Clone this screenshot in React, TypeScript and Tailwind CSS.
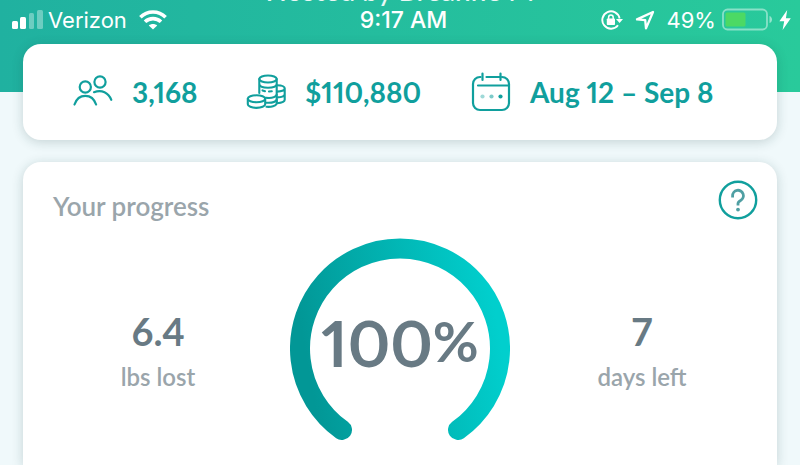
import React from 'react';

const SignalIcon: React.FC = () => (
  <svg className="h-5 w-8" viewBox="0 0 32 20" fill="white" aria-hidden="true">
    <rect x="0" y="11" width="6" height="8" rx="1.5" />
    <rect x="8" y="7" width="6" height="12" rx="1.5" />
    <rect x="17" y="3" width="5" height="16" rx="1.5" opacity="0.35" />
    <rect x="25" y="0" width="6" height="19" rx="1.5" opacity="0.35" />
  </svg>
);

const WifiIcon: React.FC = () => (
  <svg className="h-5 w-7" viewBox="0 0 28 20" fill="none" stroke="white" strokeWidth="3.6" aria-hidden="true">
    <path d="M1.4 7.2C8.4 .2 19.6 .2 26.6 7.2" />
    <path d="M6 11.8c4.5-4.3 11.5-4.3 16 0" />
    <path d="M14 19.5l-4.2-4.1c2.2-2 6.2-2 8.4 0z" fill="white" stroke="none" />
  </svg>
);

const RotationLockIcon: React.FC = () => (
  <svg className="h-5 w-[22px]" viewBox="0 0 22 20" fill="none" stroke="white" strokeWidth="1.9" aria-hidden="true">
    <path d="M18.6 8.5A8.7 8.7 0 1 0 17 15.2" />
    <path d="M15 9h7l-3.4 4z" fill="white" stroke="none" />
    <rect x="5.8" y="8.5" width="8.2" height="6.5" rx=".8" fill="white" stroke="none" />
    <path d="M7.6 9.5V7.4a2.3 2.3 0 0 1 4.6 0v2.1" strokeWidth="1.5" />
  </svg>
);

const LocationIcon: React.FC = () => (
  <svg className="h-5 w-5" viewBox="0 0 20 20" fill="none" stroke="white" strokeWidth="2.3" strokeLinejoin="round" aria-hidden="true">
    <path d="M18 2L2 9.4l8.2.8.8 8.2z" />
  </svg>
);

const BatteryIcon: React.FC = () => (
  <svg className="h-6 w-[51px]" viewBox="0 0 51 24" fill="none" aria-hidden="true">
    <rect x="1" y="1.5" width="44" height="20" rx="4.5" stroke="white" strokeOpacity="0.45" strokeWidth="1.8" />
    <rect x="3.5" y="4.5" width="20" height="14" rx="1.5" fill="#4cd964" />
    <path d="M47.5 8c3.4 1 3.4 6 0 7z" fill="white" fillOpacity="0.5" />
  </svg>
);

const BoltIcon: React.FC = () => (
  <svg className="h-5 w-3" viewBox="0 0 12 20" fill="white" aria-hidden="true">
    <path d="M8.2 0L.4 11.2h4.8L3.6 20 11.8 8.2H6.9z" />
  </svg>
);

const PeopleIcon: React.FC = () => (
  <svg className="h-10 w-10" viewBox="0 0 40 40" fill="none" stroke="currentColor" strokeWidth="2.2" strokeLinecap="round" aria-hidden="true">
    <circle cx="12.3" cy="15" r="5.6" />
    <circle cx="27" cy="10" r="5.6" />
    <path d="M1.5 32.5c1.7-5.2 5.8-8.7 10.8-8.7s9.1 3.5 10.8 8.7" />
    <path d="M21 20.2c7.8-3 14.5.5 17.3 7.6" />
  </svg>
);

const CoinsIcon: React.FC = () => (
  <svg className="h-10 w-10" viewBox="0 0 40 40" fill="none" stroke="currentColor" strokeWidth="2.1" strokeLinecap="round" aria-hidden="true">
    <ellipse cx="22" cy="7" rx="8.7" ry="3.5" />
    <path d="M13.3 7v14M30.7 7v22.5M13.3 12.3c1 4.6 16.4 4.6 17.4 0" />
    <path d="M16.5 18.4l2.5.8M23 19.5l2.8-.2" />
    <path d="M20 25.8c4.8.5 9.4-.6 10.7-3M20.5 30.7c4.6.3 9.1-.8 10.2-3M20.5 34.8c4.8.5 9.2-.9 10.2-3.2v-3" />
    <path d="M31 13.2c4.3.1 7.7 1.2 7.7 3.1v11.5c0 1.9-3.4 3.1-7.7 3.4M31 19.6c4.3-.1 7.7-1.4 7.7-3.3M31 25.4c4.3-.1 7.7-1.5 7.7-3.4" />
    <ellipse cx="10.5" cy="26.8" rx="8.7" ry="3.5" />
    <path d="M1.8 26.8v5.4c0 2.1 3.9 3.7 8.7 3.7s8.7-1.6 8.7-3.7v-5.4" />
  </svg>
);

const CalendarIcon: React.FC = () => (
  <svg className="h-10 w-10" viewBox="0 0 40 40" fill="none" stroke="currentColor" strokeWidth="2.2" strokeLinecap="round" aria-hidden="true">
    <path d="M9.5 5H9a7 7 0 0 0-7 7v19a7 7 0 0 0 7 7h22a7 7 0 0 0 7-7V12a7 7 0 0 0-7-7" />
    <path d="M15.5 5H29.5M11.5 1.5v6.5M29.5 1.5v6.5M7 13.5h30.5" />
    <circle cx="11.5" cy="24.5" r="2.1" fill="currentColor" stroke="none" opacity="0.4" />
    <circle cx="20.5" cy="24.5" r="2.1" fill="currentColor" stroke="none" opacity="0.55" />
    <circle cx="29.5" cy="24.5" r="2.1" fill="currentColor" stroke="none" />
  </svg>
);

const HelpIcon: React.FC = () => (
  <svg className="h-10 w-10" viewBox="0 0 40 40" fill="none" stroke="#109f9d" strokeWidth="2.4" aria-hidden="true">
    <circle cx="20" cy="20" r="18.2" />
    <path d="M14.6 17.4v-1.6a5.4 5.4 0 1 1 8 4.6c-1.9 1-2.6 1.7-2.6 3.2v1.8" stroke="#4f9fa3" strokeWidth="2.8" />
    <circle cx="20" cy="29.6" r="1.9" fill="#4f9fa3" stroke="none" />
  </svg>
);

const stats = [
  { icon: <PeopleIcon />, value: '3,168' },
  { icon: <CoinsIcon />, value: '$110,880' },
  { icon: <CalendarIcon />, value: 'Aug 12 – Sep 8' },
];

const Metric: React.FC<{ value: string; label: string }> = ({ value, label }) => (
  <div className="flex flex-col items-center pt-7">
    <span className="text-[38px] leading-12 font-bold text-[#687a84]">{value}</span>
    <span className="text-2xl leading-11 font-semibold text-[#9aa5ab]">{label}</span>
  </div>
);

const ProgressRing: React.FC = () => (
  <div className="relative flex justify-center">
    <svg className="h-[202px] w-[220px]" viewBox="0 0 220 202" fill="none" aria-hidden="true">
      <defs>
        <linearGradient id="ring" x1="0" y1="130" x2="220" y2="90" gradientUnits="userSpaceOnUse">
          <stop offset="0.08" stopColor="#029796" />
          <stop offset="0.95" stopColor="#01cfcd" />
        </linearGradient>
      </defs>
      <path d="M52 192A100 100 0 1 1 168 192" stroke="url(#ring)" strokeWidth="20" strokeLinecap="round" />
    </svg>
    <div className="absolute inset-0 flex items-center justify-center pt-2 font-bold text-[#687a84]">
      <span className="text-[64px] leading-16 proportional-nums">100</span>
      <span className="pb-1 text-[56px] leading-16">%</span>
    </div>
  </div>
);

const App: React.FC = () => {
  return (
    <div className="flex min-h-screen flex-col bg-[#f0f9fb] font-['Lato',sans-serif]">
      <header className="overflow-hidden bg-linear-to-r from-[#20b1a0] to-[#29ca9b] pb-15">
        <h1 className="-mt-6 mb-1 text-center text-[28px] leading-7 font-medium text-white/90">Hosted by Breanne M</h1>
        <div className="grid h-6 grid-cols-3 items-center pr-[9px] pl-3 font-['Inter',sans-serif] text-[22px] leading-6 text-white">
          <div className="flex items-center gap-1">
            <SignalIcon />
            <span>Verizon</span>
            <span className="pl-2"><WifiIcon /></span>
          </div>
          <span className="pl-1 text-center text-[23px] font-medium">9:17 AM</span>
          <div className="flex items-center justify-end gap-1.5">
            <RotationLockIcon />
            <span className="px-1.5"><LocationIcon /></span>
            <span>49%</span>
            <BatteryIcon />
            <BoltIcon />
          </div>
        </div>
      </header>

      <main className="-mt-12 flex flex-1 flex-col gap-[22px] px-[23px]">
        <section className="relative grid h-24 grid-cols-[173fr_225fr_256fr] items-center rounded-[18px] bg-white px-[50px] text-[28px] font-bold text-[#109f9d] proportional-nums shadow-[0_2px_12px_rgba(20,60,60,0.2)]">
          {stats.map((stat) => (
            <div key={stat.value} className="flex items-center gap-[19px]">
              {stat.icon}
              <span className="whitespace-nowrap">{stat.value}</span>
            </div>
          ))}
        </section>

        <section className="flex-1 rounded-t-[18px] bg-white shadow-[0_2px_12px_rgba(20,60,60,0.2)]">
          <div className="flex items-end justify-between pt-[18px] pr-[19px] pl-[30px]">
            <h2 className="text-[26px] leading-7 font-semibold text-[#9aa5ab]">Your progress</h2>
            <button type="button" aria-label="Help" className="rounded-full">
              <HelpIcon />
            </button>
          </div>
          <div className="mt-[18px] grid grid-cols-3 items-center px-3.5">
            <Metric value="6.4" label="lbs lost" />
            <ProgressRing />
            <Metric value="7" label="days left" />
          </div>
        </section>
      </main>
    </div>
  );
};

export default App;
